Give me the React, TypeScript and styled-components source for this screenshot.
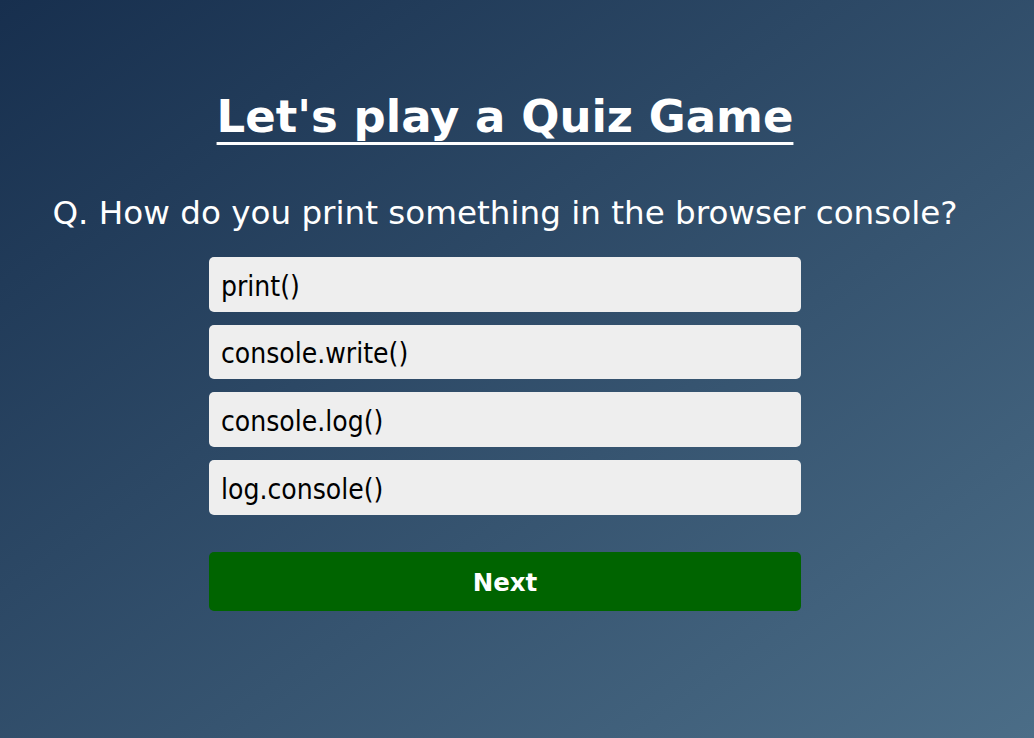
import React from "react";
import styled, { createGlobalStyle } from "styled-components";

const GlobalStyle = createGlobalStyle`
  html, body { margin: 0; padding: 0; }
  body {
    font-family: "DejaVu Sans", Verdana, sans-serif;
  }
`;

const Page = styled.div`
  width: 1034px;
  height: 738px;
  box-sizing: border-box;
  background: linear-gradient(to right bottom, #172f4e, #4b6d87);
  display: flex;
  flex-direction: column;
  align-items: center;
  padding: 91px 24px 0 0;
  color: #fff;
  overflow: hidden;
`;

const Title = styled.h1`
  margin: 0;
  font-size: 45px;
  font-weight: bold;
  line-height: 52px;
  text-decoration: underline;
  text-decoration-thickness: 3px;
  text-underline-offset: 10px;
  text-decoration-skip-ink: none;
`;

const Question = styled.h2`
  margin: 50px 0 0;
  font-size: 32.6px;
  font-weight: normal;
  line-height: 40px;
  white-space: nowrap;
`;

const Options = styled.div`
  margin-top: 24px;
  width: 592px;
  display: flex;
  flex-direction: column;
  gap: 13px;
`;

const Option = styled.button`
  height: 54.67px;
  border: none;
  border-radius: 5px;
  background: #eeeeee;
  color: #000;
  font-family: "DejaVu Sans Condensed", "DejaVu Sans", Tahoma, sans-serif;
  font-stretch: condensed;
  font-size: 28px;
  text-align: left;
  padding: 4px 12px 0;
  cursor: pointer;
`;

const NextButton = styled.button`
  margin-top: 37px;
  width: 592px;
  height: 59px;
  border: none;
  border-radius: 5px;
  background: #006400;
  color: #fff;
  font-family: "DejaVu Sans", Verdana, sans-serif;
  font-size: 24.5px;
  font-weight: bold;
  padding: 2px 0 0;
  cursor: pointer;
`;

const answers = ["print()", "console.write()", "console.log()", "log.console()"];

export default function App() {
  return (
    <>
      <GlobalStyle />
      <Page>
        <Title>Let's play a Quiz Game</Title>
        <Question>Q. How do you print something in the browser console?</Question>
        <Options>
          {answers.map((a) => (
            <Option key={a}>{a}</Option>
          ))}
        </Options>
        <NextButton>Next</NextButton>
      </Page>
    </>
  );
}
